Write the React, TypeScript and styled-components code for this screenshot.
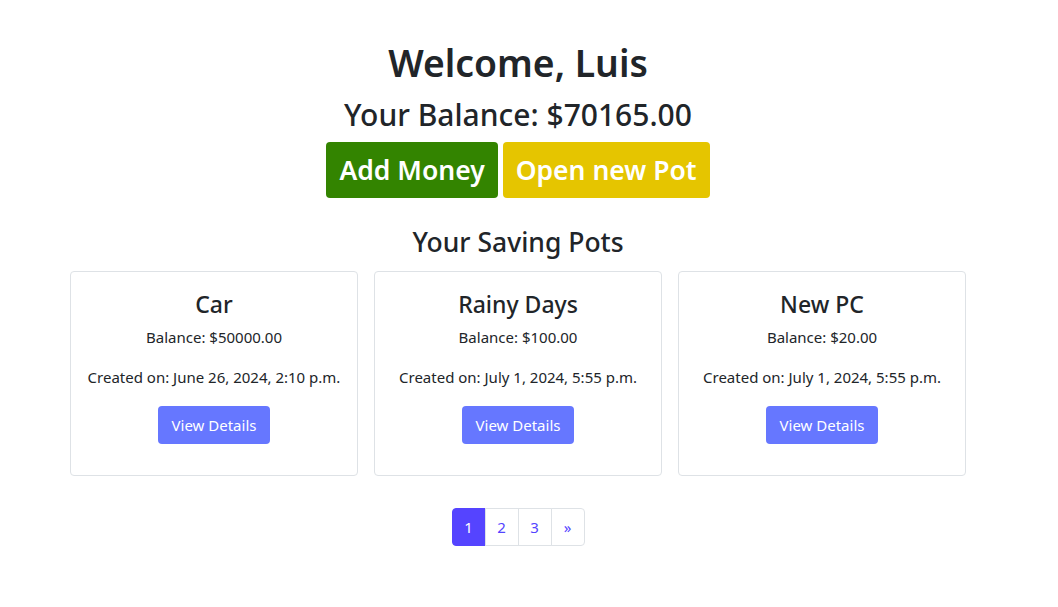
import styled, { createGlobalStyle } from "styled-components";

const GlobalStyle = createGlobalStyle`
  body {
    margin: 0;
    background: #fff;
    color: #212529;
    font-family: "Noto Sans", "Open Sans", sans-serif;
  }
`;

const Page = styled.main`
  width: 1036px;
  display: flex;
  flex-direction: column;
  align-items: center;
  padding-top: 39px;
`;

const Title = styled.h1`
  margin: 0 0 9px;
  font-size: 37.3px;
  font-weight: 600;
  line-height: 48px;
`;

const Balance = styled.h2`
  margin: 0;
  font-size: 30px;
  font-weight: 500;
  line-height: 38px;
`;

const Actions = styled.div`
  display: flex;
  gap: 5px;
  margin-top: 8px;
`;

const BigButton = styled.button<{ $bg: string }>`
  height: 56px;
  padding: 0 13px;
  border: none;
  border-radius: 4px;
  background: ${(p) => p.$bg};
  color: #fff;
  font-family: inherit;
  font-size: 26.5px;
  font-weight: 600;
`;

const SectionTitle = styled.h3`
  margin: 27px 0 12px;
  font-size: 26.5px;
  font-weight: 500;
  line-height: 34px;
`;

const Grid = styled.div`
  display: grid;
  grid-template-columns: repeat(3, 288px);
  gap: 16px;
`;

const Card = styled.div`
  height: 205px;
  box-sizing: border-box;
  border: 1px solid #dee2e6;
  border-radius: 4px;
  padding: 17px 10px;
  display: flex;
  flex-direction: column;
  align-items: center;
  text-align: center;
`;

const CardTitle = styled.h4`
  margin: 0 0 7px;
  font-size: 23px;
  font-weight: 500;
  line-height: 30px;
`;

const CardText = styled.p`
  margin: 0 0 18px;
  font-size: 15px;
  line-height: 22px;
`;

const DetailsButton = styled.button`
  height: 38px;
  padding: 0 14px;
  border: none;
  border-radius: 4px;
  background: #6677ff;
  color: #fff;
  font-family: inherit;
  font-size: 15px;
`;

const Pager = styled.nav`
  display: flex;
  margin-top: 32px;
`;

const PageLink = styled.a<{ $active?: boolean }>`
  width: 34px;
  height: 38px;
  box-sizing: border-box;
  display: flex;
  align-items: center;
  justify-content: center;
  font-size: 15px;
  border: 1px solid ${(p) => (p.$active ? "#5544ff" : "#dee2e6")};
  margin-left: -1px;
  background: ${(p) => (p.$active ? "#5544ff" : "#fff")};
  color: ${(p) => (p.$active ? "#fff" : "#5544ff")};
  &:first-child {
    margin-left: 0;
    border-radius: 4px 0 0 4px;
  }
  &:last-child {
    border-radius: 0 4px 4px 0;
  }
`;

const pots = [
  { name: "Car", balance: "50000.00", created: "June 26, 2024, 2:10 p.m." },
  { name: "Rainy Days", balance: "100.00", created: "July 1, 2024, 5:55 p.m." },
  { name: "New PC", balance: "20.00", created: "July 1, 2024, 5:55 p.m." },
];

export default function App() {
  return (
    <>
      <GlobalStyle />
      <Page>
        <Title>Welcome, Luis</Title>
        <Balance>Your Balance: $70165.00</Balance>
        <Actions>
          <BigButton $bg="#338400">Add Money</BigButton>
          <BigButton $bg="#e5c500">Open new Pot</BigButton>
        </Actions>
        <SectionTitle>Your Saving Pots</SectionTitle>
        <Grid>
          {pots.map((pot) => (
            <Card key={pot.name}>
              <CardTitle>{pot.name}</CardTitle>
              <CardText>Balance: ${pot.balance}</CardText>
              <CardText>Created on: {pot.created}</CardText>
              <DetailsButton>View Details</DetailsButton>
            </Card>
          ))}
        </Grid>
        <Pager>
          <PageLink $active>1</PageLink>
          <PageLink>2</PageLink>
          <PageLink>3</PageLink>
          <PageLink>»</PageLink>
        </Pager>
      </Page>
    </>
  );
}
